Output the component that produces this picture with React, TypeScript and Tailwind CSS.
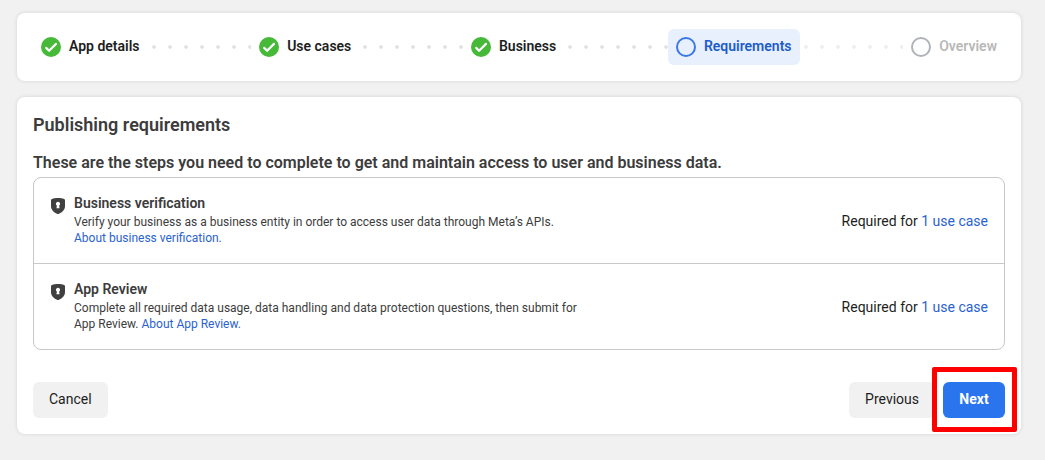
import type { ReactNode } from "react";

type StepState = "done" | "current" | "upcoming";

const steps: { label: string; state: StepState }[] = [
  { label: "App details", state: "done" },
  { label: "Use cases", state: "done" },
  { label: "Business", state: "done" },
  { label: "Requirements", state: "current" },
  { label: "Overview", state: "upcoming" },
];

const itemStyles: Record<StepState, string> = {
  done: "text-[#1c1e21]",
  current: "rounded-md bg-[#e8f0fd] text-[#205cc9]",
  upcoming: "text-[#b8b8b8]",
};

function StepIcon({ state }: { state: StepState }) {
  if (state === "done") {
    return (
      <svg viewBox="0 0 20 20" className="size-5 shrink-0" aria-hidden="true">
        <circle cx="10" cy="10" r="10" fill="#46b938" />
        <path
          d="M5.2 10.9 L8.1 13.8 L15 6.9"
          fill="none"
          stroke="#fff"
          strokeWidth="2.2"
          strokeLinecap="round"
          strokeLinejoin="round"
        />
      </svg>
    );
  }
  return (
    <svg viewBox="0 0 20 20" className="size-5 shrink-0" aria-hidden="true">
      <circle
        cx="10"
        cy="10"
        r="9"
        fill="none"
        stroke={state === "current" ? "#3b78e7" : "#b0b3b8"}
        strokeWidth="2"
      />
    </svg>
  );
}

function Dots({ faint }: { faint: boolean }) {
  return (
    <li
      aria-hidden="true"
      className={`h-1 flex-1 bg-[radial-gradient(circle_at_6px_2px,#e2e2e2_1.5px,transparent_2.2px)] bg-[length:16px_4px] ${
        faint ? "opacity-60" : ""
      }`}
    />
  );
}

function Stepper() {
  return (
    <nav aria-label="Progress" className="rounded-lg bg-white p-4 shadow-[0_0_4px_rgba(0,0,0,0.12)]">
      <ol className="flex items-center">
        {steps.flatMap((step, i) => [
          i > 0 ? <Dots key={`dots-${step.label}`} faint={step.state === "upcoming"} /> : null,
          <li
            key={step.label}
            aria-current={step.state === "current" ? "step" : undefined}
            className={`flex h-9 items-center gap-2 px-2 text-sm font-semibold ${itemStyles[step.state]}`}
          >
            <StepIcon state={step.state} />
            <span className="pb-0.5">{step.label}</span>
          </li>,
        ])}
      </ol>
    </nav>
  );
}

function ShieldIcon() {
  return (
    <svg viewBox="0 0 14 16" className="mt-1 h-4 w-3.5 shrink-0" aria-hidden="true">
      <path
        d="M7 0 C4.6 0 2.6 .4 .9 1 C.3 1.2 0 1.6 0 2.2 V8 C0 11.8 3 14.6 6.4 15.9 C6.8 16 7.2 16 7.6 15.9 C11 14.6 14 11.8 14 8 V2.2 C14 1.6 13.7 1.2 13.1 1 C11.4 .4 9.4 0 7 0 Z"
        fill="#404040"
      />
      <path
        d="M7 3.8 A2.1 2.1 0 0 1 8.1 7.7 L8.6 10.2 H5.4 L5.9 7.7 A2.1 2.1 0 0 1 7 3.8 Z"
        fill="#fff"
      />
    </svg>
  );
}

function TextLink({ children }: { children: ReactNode }) {
  return (
    <a href="#" className="text-[#2a62cf] hover:underline">
      {children}
    </a>
  );
}

function Requirement({ title, children }: { title: string; children: ReactNode }) {
  return (
    <li className="flex items-center justify-between gap-4 py-4 pr-4 pl-[17px]">
      <div className="flex gap-[9px] pb-px">
        <ShieldIcon />
        <div className="max-w-[520px]">
          <h3 className="mb-0.5 text-sm leading-[18px] font-semibold">{title}</h3>
          <p className="text-xs leading-4">{children}</p>
        </div>
      </div>
      <p className="shrink-0 text-sm text-[#1c1e21]">
        Required for <TextLink>1 use case</TextLink>
      </p>
    </li>
  );
}

export default function App() {
  return (
    <div className="min-h-screen bg-[#f1f1f1] pt-[13px] pr-6 pb-6 pl-[17px] font-[Roboto,'Liberation_Sans',sans-serif] text-[#3c3c3c]">
      <Stepper />
      <main className="mt-4 rounded-lg bg-white p-4 shadow-[0_0_4px_rgba(0,0,0,0.12)]">
        <h1 className="text-lg leading-6 font-semibold">Publishing requirements</h1>
        <h2 className="mt-4 mb-1 text-base leading-5 font-semibold">
          These are the steps you need to complete to get and maintain access to user and business data.
        </h2>
        <ul className="divide-y divide-[#c8c8c8] rounded-lg border border-[#c8c8c8]">
          <Requirement title="Business verification">
            Verify your business as a business entity in order to access user data through Meta’s APIs.
            <br />
            <TextLink>About business verification.</TextLink>
          </Requirement>
          <Requirement title="App Review">
            Complete all required data usage, data handling and data protection questions, then submit for
            <br />
            App Review. <TextLink>About App Review.</TextLink>
          </Requirement>
        </ul>
        <div className="mt-8 flex items-center justify-between text-sm text-[#1c1e21]">
          <button type="button" className="h-9 rounded-md bg-[#f1f1f1] px-4 pb-0.5">
            Cancel
          </button>
          <div className="flex gap-2">
            <button type="button" className="h-9 rounded-md bg-[#f1f1f1] px-4 pb-0.5">
              Previous
            </button>
            <div className="relative">
              <button
                type="button"
                className="h-9 min-w-[62px] rounded-md bg-[#2a74ed] px-4 pb-0.5 font-bold text-white"
              >
                Next
              </button>
              <div className="pointer-events-none absolute -top-[15px] -right-3 -bottom-3.5 -left-[11px] rounded-xs border-5 border-[#ff0000]" />
            </div>
          </div>
        </div>
      </main>
    </div>
  );
}
